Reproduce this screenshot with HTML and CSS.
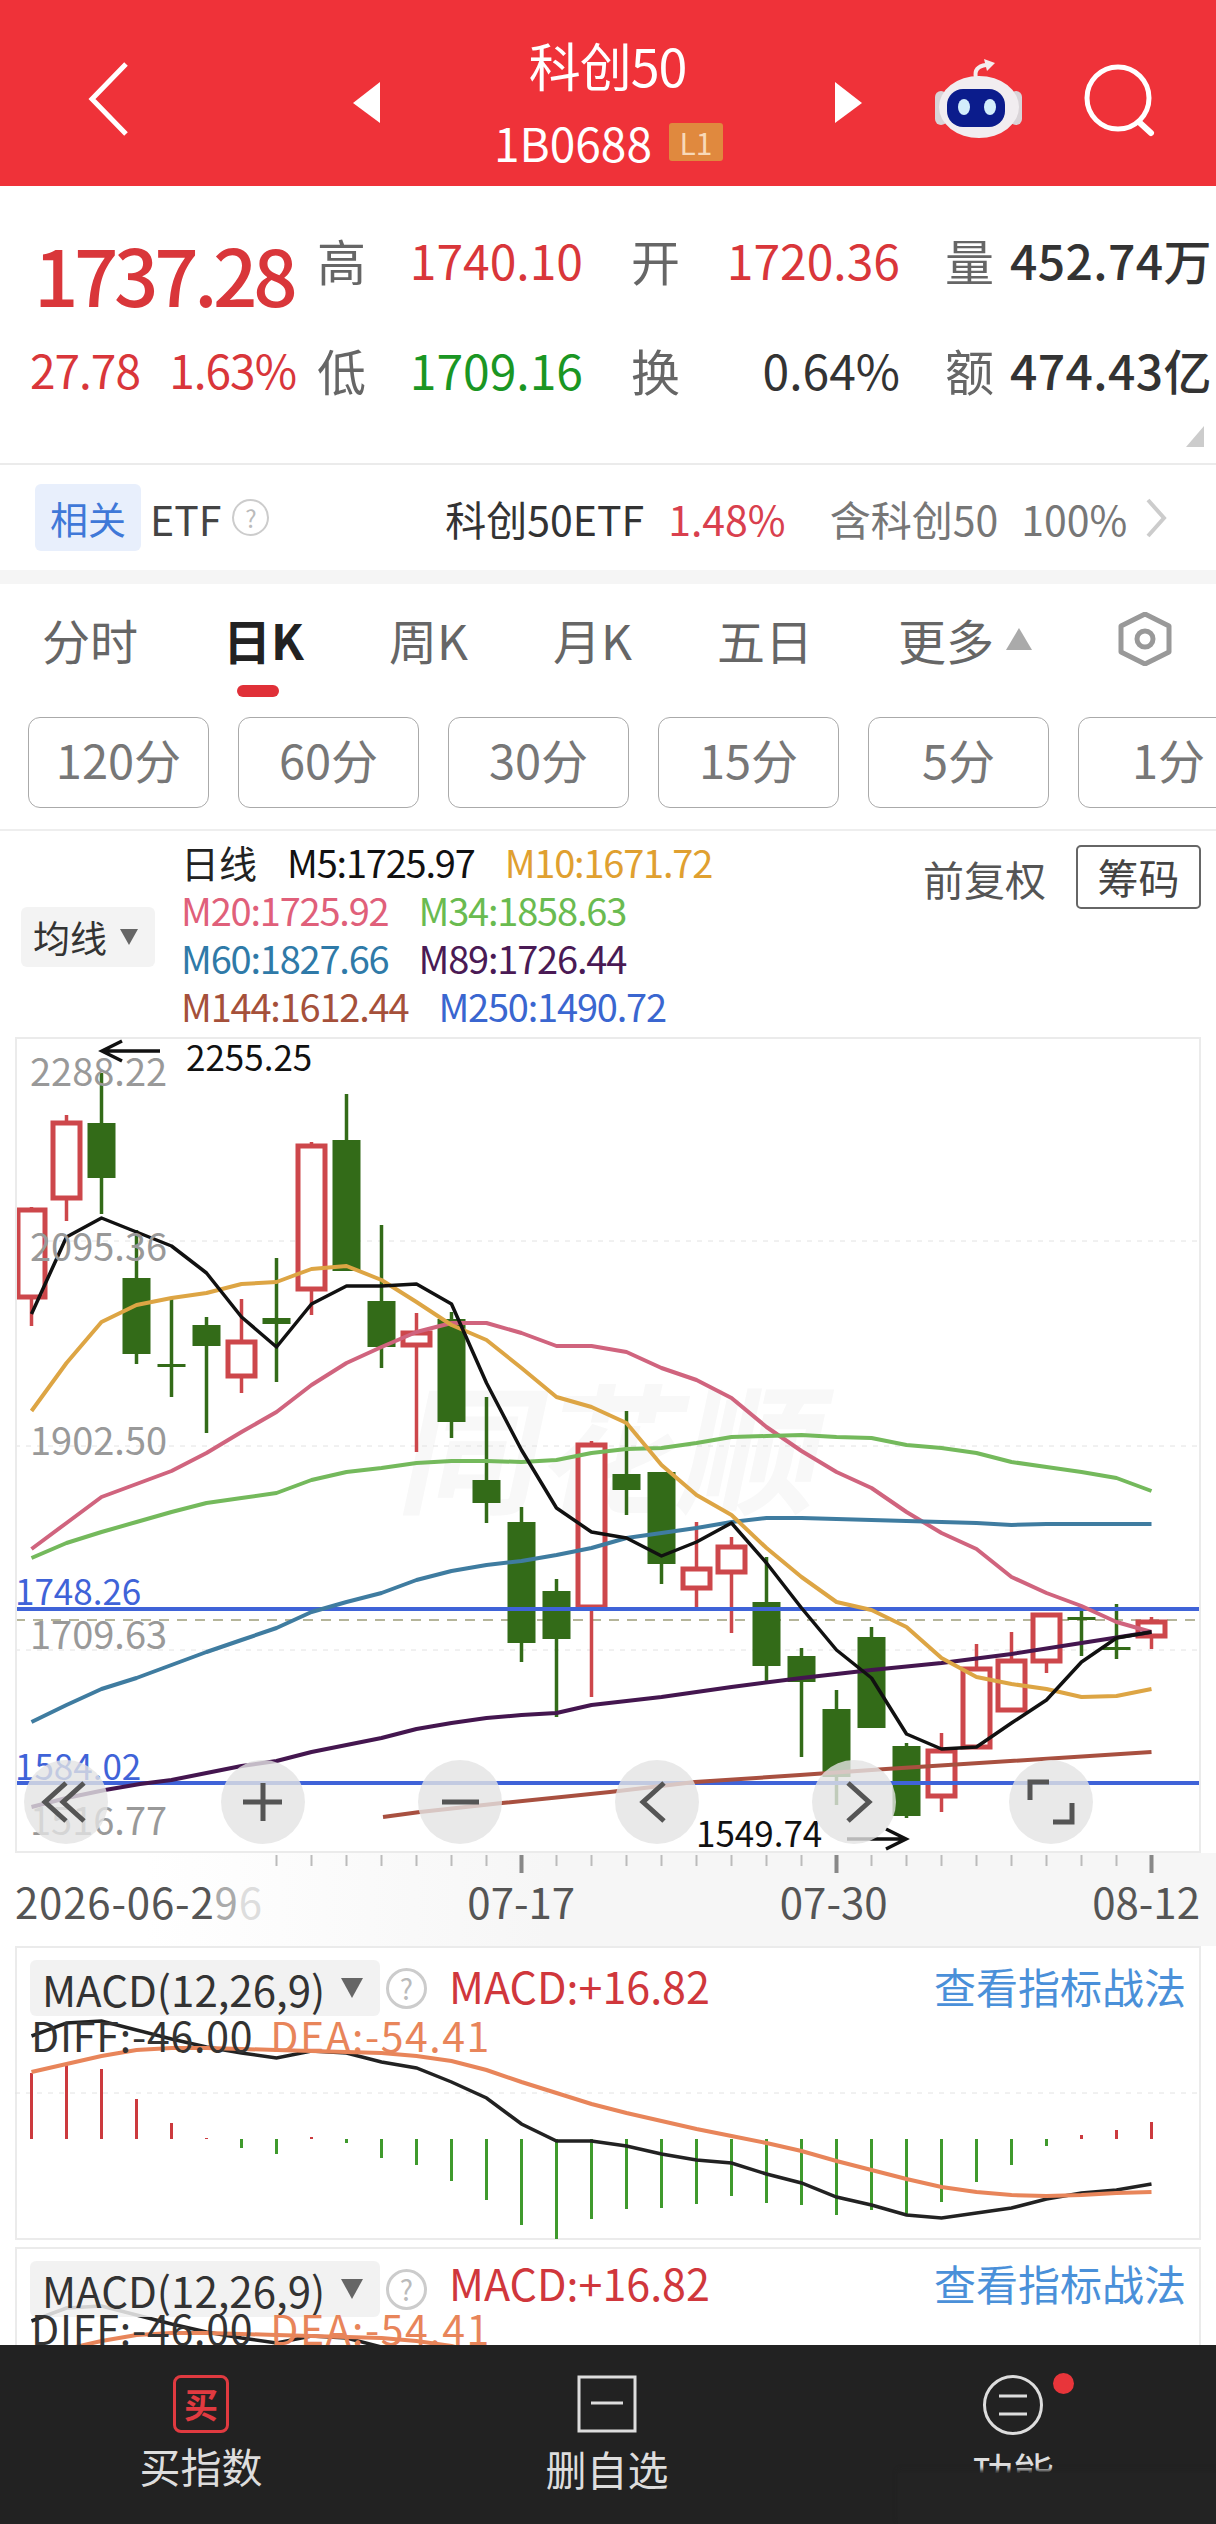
FILE: index.html
```html
<!DOCTYPE html>
<html lang="zh-CN">
<head>
    <meta charset="UTF-8">
    <title>科创50</title>
    <link rel="stylesheet" href="styles.css">
</head>
<body>

<div class="page">

    <header class="topbar">
        <div class="back">
            <svg width="44" height="76" viewBox="0 0 44 76"><path d="M39 3 5 38l34 35" fill="none" stroke="#fff" stroke-width="5"/></svg>
        </div>
        <svg class="arrow" width="27" height="41" viewBox="0 0 27 41"><path d="M27 0 0 21l27 20z" fill="#fff"/></svg>
        <div class="title">
            <div class="title-name">科创50</div>
            <div class="title-code">1B0688<span class="badge">L1</span></div>
        </div>
        <svg class="arrow" width="27" height="41" viewBox="0 0 27 41"><path d="M0 0l27 21L0 41z" fill="#fff"/></svg>
        <div class="top-actions">
            <svg width="90" height="96" viewBox="0 0 90 96">
                <path d="M41 33c-2-8 2-12 10-13" fill="none" stroke="#f4eeee" stroke-width="4"/>
                <path d="M49 14l11 4-8 8z" fill="#f4eeee"/>
                <rect x="0" y="46" width="12" height="34" rx="6" fill="#d9d4d8"/>
                <rect x="75" y="46" width="12" height="34" rx="6" fill="#d9d4d8"/>
                <ellipse cx="44" cy="62" rx="40" ry="31" fill="#f1edf0"/>
                <rect x="12" y="44" width="58" height="38" rx="16" fill="#0b1c8c"/>
                <ellipse cx="29" cy="62" rx="6" ry="8" fill="#d3eefc"/>
                <ellipse cx="55" cy="62" rx="6" ry="8" fill="#d3eefc"/>
            </svg>
            <svg class="search" width="72" height="76" viewBox="0 0 72 76">
                <circle cx="34" cy="34" r="31" fill="none" stroke="#fff" stroke-width="5"/>
                <path d="M55 58l12 11" stroke="#fff" stroke-width="6" stroke-linecap="round"/>
            </svg>
        </div>
    </header>

    <section class="quote">
        <div class="price">1737.28</div>
        <div class="label">高</div>
        <div class="val up">1740.10</div>
        <div class="label">开</div>
        <div class="val up">1720.36</div>
        <div class="label">量</div>
        <div class="val strong">452.74万</div>

        <div class="change"><span>27.78</span><span>1.63%</span></div>
        <div class="label">低</div>
        <div class="val down">1709.16</div>
        <div class="label">换</div>
        <div class="val dark">0.64%</div>
        <div class="label">额</div>
        <div class="val strong">474.43亿</div>

        <svg class="corner" width="18" height="21" viewBox="0 0 18 21"><path d="M18 0v21H0z" fill="#ccc"/></svg>
    </section>

    <section class="etf">
        <span class="etf-chip">相关</span>
        <span class="etf-name">ETF</span>
        <span class="help help-small">?</span>
        <span class="etf-fund">科创50ETF</span>
        <span class="etf-pct">1.48%</span>
        <span class="etf-note">含科创50</span>
        <span class="etf-share">100%</span>
        <svg width="22" height="40" viewBox="0 0 22 40"><path d="M3 2l16 18L3 38" fill="none" stroke="#ccc" stroke-width="4"/></svg>
    </section>

    <nav class="tabs">
        <span class="tab">分时</span>
        <span class="tab tab-active">日K</span>
        <span class="tab">周K</span>
        <span class="tab">月K</span>
        <span class="tab">五日</span>
        <span class="tab tab-more">更多<svg width="26" height="22" viewBox="0 0 26 22"><path d="M13 0l13 22H0z" fill="#aaa"/></svg></span>
        <svg class="tab-settings" width="56" height="54" viewBox="0 0 56 54">
            <path d="M28 2l24 12v26L28 52 4 40V14z" fill="none" stroke="#999" stroke-width="5" stroke-linejoin="round"/>
            <circle cx="28" cy="27" r="8" fill="none" stroke="#999" stroke-width="5"/>
        </svg>
    </nav>

    <div class="periods">
        <span class="period">120分</span>
        <span class="period">60分</span>
        <span class="period">30分</span>
        <span class="period">15分</span>
        <span class="period">5分</span>
        <span class="period">1分</span>
    </div>

    <section class="legend">
        <div class="ma-select">均线<svg width="18" height="16" viewBox="0 0 18 16"><path d="M0 0h18L9 16z" fill="#666"/></svg></div>
        <div class="ma-list">
            <div class="ma-row"><span class="ma-title">日线</span><span class="c-m5">M5:1725.97</span><span class="c-m10">M10:1671.72</span></div>
            <div class="ma-row"><span class="c-m20">M20:1725.92</span><span class="c-m34">M34:1858.63</span></div>
            <div class="ma-row"><span class="c-m60">M60:1827.66</span><span class="c-m89">M89:1726.44</span></div>
            <div class="ma-row"><span class="c-m144">M144:1612.44</span><span class="c-m250">M250:1490.72</span></div>
        </div>
        <div class="legend-right">
            <span class="adjust">前复权</span>
            <span class="chips">筹码</span>
        </div>
    </section>

    <div class="kline">
        <svg class="kline-svg" viewBox="15 1037 1186 816">
            <text class="watermark" x="0" y="0" transform="translate(395 1503) skewX(-12)">同花顺</text>

            <path class="grid" d="M15 1241H1201M15 1446H1201M15 1650H1201"/>
            <path class="grid-last" d="M15 1620H1201"/>

            <path class="wick-down" d="M101.5 1073V1214M136.5 1230V1364M171.5 1299V1397M206.5 1317V1433M276.5 1258V1382M346.5 1094V1271M381.5 1225V1368M451.5 1312V1438M486.5 1397V1523M521.5 1507V1662M556.5 1579V1717M626.5 1411V1515M661.5 1472V1584M766.5 1557V1684M801.5 1648V1757M836.5 1690V1805M871.5 1627V1728M906.5 1743V1818M1081.5 1605V1656M1116.5 1604V1659"/>
            <path class="wick-up" d="M31.5 1207V1326M66.5 1115V1221M241.5 1299V1393M311.5 1142V1315M416.5 1313V1452M591.5 1441V1697M696.5 1522V1608M731.5 1537V1633M941.5 1733V1812M976.5 1644V1749M1011.5 1632V1712M1046.5 1613V1673M1151.5 1617V1649"/>

            <g class="body-down">
                <rect x="87.5" y="1123" width="28" height="55"/>
                <rect x="122.5" y="1278" width="28" height="76"/>
                <rect x="157.5" y="1364" width="28" height="3"/>
                <rect x="192.5" y="1325" width="28" height="21"/>
                <rect x="262.5" y="1318" width="28" height="6"/>
                <rect x="332.5" y="1140" width="28" height="131"/>
                <rect x="367.5" y="1301" width="28" height="46"/>
                <rect x="437.5" y="1319" width="28" height="103"/>
                <rect x="472.5" y="1480" width="28" height="23"/>
                <rect x="507.5" y="1522" width="28" height="121"/>
                <rect x="542.5" y="1591" width="28" height="48"/>
                <rect x="612.5" y="1474" width="28" height="16"/>
                <rect x="647.5" y="1472" width="28" height="92"/>
                <rect x="752.5" y="1602" width="28" height="64"/>
                <rect x="787.5" y="1656" width="28" height="26"/>
                <rect x="822.5" y="1709" width="28" height="68"/>
                <rect x="857.5" y="1637" width="28" height="91"/>
                <rect x="892.5" y="1746" width="28" height="70"/>
                <rect x="1067.5" y="1617" width="28" height="3"/>
                <rect x="1102.5" y="1647" width="28" height="3"/>
            </g>
            <g class="body-up">
                <rect x="18" y="1210" width="27" height="87"/>
                <rect x="53" y="1123" width="27" height="75"/>
                <rect x="228" y="1342" width="27" height="34"/>
                <rect x="298" y="1146" width="27" height="143"/>
                <rect x="403" y="1333" width="27" height="12"/>
                <rect x="578" y="1445" width="27" height="162"/>
                <rect x="683" y="1569" width="27" height="19"/>
                <rect x="718" y="1547" width="27" height="25"/>
                <rect x="928" y="1751" width="27" height="45"/>
                <rect x="963" y="1669" width="27" height="78"/>
                <rect x="998" y="1661" width="27" height="49"/>
                <rect x="1033" y="1615" width="27" height="46"/>
                <rect x="1138" y="1622" width="27" height="14"/>
            </g>

            <path class="level" d="M15 1609H1201M15 1783H1201"/>

            <polyline class="ma ma-20" points="31.5,1549 66.5,1523 101.5,1497 136.5,1484 171.5,1471 206.5,1453 241.5,1432 276.5,1412 311.5,1385 346.5,1363 381.5,1347 416.5,1332 451.5,1323 486.5,1323 521.5,1333 556.5,1346 591.5,1346 626.5,1352 661.5,1368 696.5,1380 731.5,1398 766.5,1427 801.5,1451 836.5,1472 871.5,1488 906.5,1512 941.5,1533 976.5,1549 1011.5,1577 1046.5,1593 1081.5,1606 1116.5,1622 1151.5,1632"/>
            <polyline class="ma ma-34" points="31.5,1558 66.5,1543 101.5,1532 136.5,1522 171.5,1512 206.5,1503 241.5,1498 276.5,1493 311.5,1480 346.5,1472 381.5,1468 416.5,1463 451.5,1461 486.5,1461 521.5,1462 556.5,1460 591.5,1453 626.5,1449 661.5,1448 696.5,1443 731.5,1437 766.5,1436 801.5,1435 836.5,1437 871.5,1438 906.5,1445 941.5,1448 976.5,1453 1011.5,1462 1046.5,1467 1081.5,1472 1116.5,1478 1151.5,1491"/>
            <polyline class="ma ma-60" points="31.5,1722 66.5,1705 101.5,1689 136.5,1678 171.5,1665 206.5,1652 241.5,1640 276.5,1628 311.5,1612 346.5,1602 381.5,1593 416.5,1580 451.5,1571 486.5,1565 521.5,1561 556.5,1555 591.5,1548 626.5,1538 661.5,1533 696.5,1528 731.5,1522 766.5,1518 801.5,1518 836.5,1519 871.5,1520 906.5,1521 941.5,1522 976.5,1523 1011.5,1525 1046.5,1524 1151.5,1524"/>
            <polyline class="ma ma-89" points="31.5,1807 66.5,1798 105,1790 140,1784 171.5,1780 206.5,1773 241.5,1766 276.5,1761 311.5,1752 346.5,1745 381.5,1738 416.5,1729 451.5,1723 486.5,1718 521.5,1715 556.5,1713 591.5,1705 661.5,1697 731.5,1687 801.5,1678 871.5,1670 941.5,1663 1011.5,1654 1081.5,1643 1151.5,1632"/>
            <polyline class="ma ma-144" points="383,1817 420,1812 502,1803 610,1792 695,1782 800,1775 886,1769 1151.5,1752"/>
            <polyline class="ma ma-10" points="31.5,1411 66.5,1363 101.5,1322 136.5,1305 171.5,1298 206.5,1293 241.5,1284 276.5,1282 311.5,1269 346.5,1266 381.5,1280 416.5,1302 451.5,1325 486.5,1340 521.5,1368 556.5,1397 591.5,1407 626.5,1423 661.5,1465 696.5,1495 731.5,1515 766.5,1548 801.5,1577 836.5,1602 871.5,1610 906.5,1627 941.5,1658 976.5,1677 1011.5,1684 1046.5,1689 1081.5,1697 1116.5,1696 1151.5,1689"/>
            <polyline class="ma ma-5" points="31.5,1314 66.5,1237 101.5,1218 136.5,1232 171.5,1246 206.5,1273 241.5,1317 276.5,1347 311.5,1304 346.5,1286 381.5,1286 416.5,1284 451.5,1304 486.5,1383 521.5,1450 556.5,1508 591.5,1532 626.5,1538 661.5,1556 696.5,1542 731.5,1523 766.5,1563 801.5,1608 836.5,1650 871.5,1678 906.5,1734 941.5,1749 976.5,1747 1011.5,1723 1046.5,1700 1081.5,1662 1116.5,1638 1151.5,1632"/>

            <text class="axis" x="30" y="1086">2288.22</text>
            <text class="axis" x="30" y="1261">2095.36</text>
            <text class="axis" x="30" y="1455">1902.50</text>
            <text class="axis" x="30" y="1649">1709.63</text>
            <text class="axis" x="30" y="1835">1516.77</text>
            <text class="axis-level" x="15" y="1605">1748.26</text>
            <text class="axis-level" x="15" y="1780">1584.02</text>
            <text class="mark" x="186" y="1071">2255.25</text>
            <text class="mark" x="696" y="1847">1549.74</text>
            <path class="mark-arrow" d="M160 1051H102M122 1041l-20 10 20 10"/>
            <path class="mark-arrow" d="M847 1839H906M886 1829l20 10-20 10"/>

            <circle class="float-btn" cx="66" cy="1802" r="42"/>
            <circle class="float-btn" cx="263" cy="1802" r="42"/>
            <circle class="float-btn" cx="460" cy="1802" r="42"/>
            <circle class="float-btn" cx="657" cy="1802" r="42"/>
            <circle class="float-btn" cx="854" cy="1802" r="42"/>
            <circle class="float-btn" cx="1051" cy="1802" r="42"/>
            <path class="float-icon" d="M66 1783l-21 19 21 19M84 1783l-21 19 21 19"/>
            <path class="float-icon" d="M243 1802H282M263 1783V1821"/>
            <path class="float-icon" d="M442 1802H479"/>
            <path class="float-icon" d="M664 1783l-21 19 21 19"/>
            <path class="float-icon" d="M848 1783l21 19-21 19"/>
            <path class="float-icon" d="M1049 1782H1030V1800M1053 1822H1072V1803"/>
        </svg>
    </div>

    <div class="dates">
        <svg class="dates-ticks" viewBox="0 0 1216 24">
            <path class="tick" d="M276.5 2V13M311.5 2V13M346.5 2V13M381.5 2V13M416.5 2V13M451.5 2V13M486.5 2V13M556.5 2V13M591.5 2V13M626.5 2V13M661.5 2V13M696.5 2V13M731.5 2V13M766.5 2V13M801.5 2V13M871.5 2V13M906.5 2V13M941.5 2V13M976.5 2V13M1011.5 2V13M1046.5 2V13M1081.5 2V13M1116.5 2V13"/>
            <path class="tick-major" d="M521.5 2V20M836.5 2V20M1151.5 2V20"/>
        </svg>
        <span class="date-first">2026-06-2<span class="fade-1">9</span><span class="fade-2">6</span></span>
        <span>07-17</span>
        <span>07-30</span>
        <span>08-12</span>
    </div>

    <section class="macd">
        <svg class="macd-svg" viewBox="15 1946 1186 294">
            <path class="grid" d="M15 2093H1201"/>
            <path class="bar-up" d="M31.5 2139V2073M66.5 2139V2064M101.5 2139V2069M136.5 2139V2099M171.5 2139V2123M206.5 2139V2138M311.5 2139V2137M1081.5 2139V2135M1116.5 2139V2130M1151.5 2139V2122"/>
            <path class="bar-down" d="M241.5 2139V2148M276.5 2139V2154M346.5 2139V2143M381.5 2139V2158M416.5 2139V2165M451.5 2139V2181M486.5 2139V2200M521.5 2139V2225M556.5 2139V2239M591.5 2139V2219M626.5 2139V2209M661.5 2139V2208M696.5 2139V2204M731.5 2139V2196M766.5 2139V2203M801.5 2139V2205M836.5 2139V2215M871.5 2139V2210M906.5 2139V2215M941.5 2139V2202M976.5 2139V2182M1011.5 2139V2165M1046.5 2139V2146"/>
            <g id="macd-lines">
                <polyline class="dif" points="31.5,2036 66.5,2023 101.5,2021 136.5,2030 171.5,2039 206.5,2047 241.5,2053 276.5,2058 311.5,2051 346.5,2053 381.5,2062 416.5,2068 451.5,2082 486.5,2098 521.5,2124 556.5,2141 591.5,2141 626.5,2146 661.5,2154 696.5,2160 731.5,2163 766.5,2174 801.5,2183 836.5,2197 871.5,2205 906.5,2215 941.5,2218 976.5,2213 1011.5,2208 1046.5,2199 1081.5,2193 1116.5,2190 1151.5,2184"/>
                <polyline class="dea" points="31.5,2072 66.5,2064 101.5,2056 136.5,2050 171.5,2048 206.5,2048 241.5,2049 276.5,2050 311.5,2051 346.5,2052 381.5,2053 416.5,2056 451.5,2061 486.5,2070 521.5,2082 556.5,2093 591.5,2104 626.5,2113 661.5,2121 696.5,2129 731.5,2136 766.5,2143 801.5,2151 836.5,2161 871.5,2170 906.5,2179 941.5,2187 976.5,2192 1011.5,2195 1046.5,2196 1081.5,2195 1116.5,2193 1151.5,2192"/>
            </g>
        </svg>
        <div class="macd-head">
            <div class="macd-select">MACD(12,26,9)<svg width="22" height="20" viewBox="0 0 22 20"><path d="M0 0h22L11 20z" fill="#666"/></svg></div>
            <span class="help">?</span>
            <span class="macd-value">MACD:+16.82</span>
            <a class="macd-link">查看指标战法</a>
        </div>
        <div class="macd-values"><span class="dif-text">DIFF:-46.00</span><span class="dea-text">DEA:-54.41</span></div>
    </section>

    <section class="macd macd-second">
        <svg class="macd-svg" viewBox="15 1962 1186 294"><use href="#macd-lines"/></svg>
        <div class="macd-head">
            <div class="macd-select">MACD(12,26,9)<svg width="22" height="20" viewBox="0 0 22 20"><path d="M0 0h22L11 20z" fill="#666"/></svg></div>
            <span class="help">?</span>
            <span class="macd-value">MACD:+16.82</span>
            <a class="macd-link">查看指标战法</a>
        </div>
        <div class="macd-values"><span class="dif-text">DIFF:-46.00</span><span class="dea-text">DEA:-54.41</span></div>
    </section>
</div>

<footer class="bottom">
    <div class="bottom-item">
        <span class="buy-icon">买</span>
        <span class="bottom-label buy-label">买指数</span>
    </div>
    <div class="bottom-item">
        <svg width="60" height="58" viewBox="0 0 60 58">
            <rect x="2" y="2" width="56" height="54" fill="none" stroke="#ddd" stroke-width="3"/>
            <path d="M14 28h32" stroke="#ddd" stroke-width="3"/>
        </svg>
        <span class="bottom-label">删自选</span>
    </div>
    <div class="bottom-item">
        <svg width="62" height="60" viewBox="0 0 62 60">
            <circle cx="31" cy="30" r="28.5" fill="none" stroke="#ddd" stroke-width="3"/>
            <path d="M17 21h28M17 39h28" stroke="#ddd" stroke-width="3"/>
        </svg>
        <span class="bottom-label">功能</span>
        <i class="red-dot"></i>
    </div>
    <div class="bottom-mask"></div>
</footer>

</body>
</html>
```

FILE: styles.css
```css
* {
    box-sizing: border-box;
}

html, body {
    margin: 0;
    height: 2524px;
    overflow: hidden;
}

body {
    display: flex;
    flex-direction: column;
    font-family: "Noto Sans CJK SC", "Noto Sans", sans-serif;
    background: #fff;
    color: #333;
}

.page {
    flex: 1;
    min-height: 0;
    overflow: hidden;
}

/* top bar */
.topbar {
    display: grid;
    grid-template-columns: 353px 27px 455px 27px 1fr;
    align-items: center;
    height: 186px;
    background: #ef3239;
    color: #fff;
}

.back {
    display: flex;
    padding: 12px 0 0 87px;
}

.arrow {
    margin-top: 18px;
}

.title {
    display: flex;
    flex-direction: column;
    align-items: center;
    padding-top: 12px;
}

.title-name {
    font-size: 52px;
    line-height: 60px;
    letter-spacing: -1px;
}

.title-code {
    display: flex;
    align-items: center;
    gap: 17px;
    margin-top: 26px;
    padding-left: 2px;
    font-size: 46px;
    line-height: 42px;
}

.badge {
    width: 54px;
    height: 38px;
    border-radius: 3px;
    background: #e0893e;
    color: #f8d9b8;
    font-size: 30px;
    line-height: 38px;
    text-align: center;
}

.top-actions {
    display: flex;
    align-items: center;
    gap: 59px;
    padding-left: 73px;
}

.search {
    margin-top: 18px;
}

/* quote */
.quote {
    position: relative;
    display: grid;
    grid-template-columns: 296px 70px 217px 97px 220px 94px 222px;
    grid-template-rows: 110px 110px;
    align-items: center;
    height: 279px;
    padding-top: 18px;
    border-bottom: 2px solid #ebebeb;
}

.price {
    padding: 29px 0 0 34px;
    color: #d9363a;
    font-size: 78px;
    font-weight: 500;
    line-height: 81px;
    letter-spacing: -4.4px;
    white-space: nowrap;
}

.change {
    display: flex;
    justify-content: space-between;
    padding-left: 30px;
    color: #d9363a;
    font-size: 46px;
    letter-spacing: -1px;
}

.label {
    color: #666;
    font-size: 49px;
    text-align: right;
}

.val {
    font-size: 48px;
    text-align: right;
    white-space: nowrap;
}

.up {
    color: #d9363a;
}

.down {
    color: #1a9623;
}

.dark {
    color: #333;
}

.strong {
    padding-right: 4px;
    color: #333;
    font-weight: 500;
    letter-spacing: .4px;
}

.corner {
    position: absolute;
    right: 12px;
    bottom: 16px;
}

/* related etf */
.etf {
    display: flex;
    align-items: center;
    height: 105px;
    padding-left: 35px;
    border-bottom: 14px solid #f5f5f5;
    box-sizing: content-box;
    font-size: 41px;
}

.etf-chip {
    width: 106px;
    height: 67px;
    border-radius: 6px;
    background: #e8effc;
    color: #3f78d8;
    font-size: 38px;
    line-height: 67px;
    text-align: center;
}

.etf-name {
    margin-left: 9px;
    color: #444;
}

.help {
    display: flex;
    align-items: center;
    justify-content: center;
    width: 41px;
    height: 41px;
    border: 3px solid #ccc;
    border-radius: 50%;
    color: #bbb;
    font-size: 28px;
}

.help-small {
    width: 37px;
    height: 37px;
    margin-left: 11px;
    border-width: 2px;
    font-size: 24px;
}

.etf-fund {
    margin-left: 176px;
    color: #333;
}

.etf-pct {
    margin-left: 24px;
    color: #d9404e;
}

.etf-note {
    margin-left: 44px;
    color: #777;
}

.etf-share {
    margin-left: 23px;
    margin-right: 18px;
    color: #777;
}

/* tabs */
.tabs {
    display: flex;
    align-items: center;
    gap: 85px;
    height: 133px;
    padding: 0 44px 24px 42px;
    font-size: 48px;
}

.tab {
    position: relative;
    flex: none;
    display: flex;
    align-items: center;
    color: #666;
    line-height: 60px;
    white-space: nowrap;
}

.tab-active {
    color: #222;
    font-weight: 700;
}

.tab-active::after {
    content: "";
    position: absolute;
    left: 14px;
    bottom: -28px;
    width: 42px;
    height: 12px;
    border-radius: 6px;
    background: #e03038;
}

.tab-more svg {
    margin-left: 12px;
}

.tab-settings {
    flex: none;
    margin-left: auto;
}

/* period buttons */
.periods {
    display: flex;
    gap: 29px;
    padding: 0 0 21px 28px;
    overflow: hidden;
    border-bottom: 2px solid #eee;
}

.period {
    flex: none;
    width: 181px;
    height: 91px;
    border: 1px solid #aaa;
    border-radius: 12px;
    color: #777;
    font-size: 47px;
    line-height: 81px;
    text-align: center;
}

/* moving average legend */
.legend {
    display: flex;
    align-items: flex-start;
    height: 206px;
    padding-left: 21px;
}

.ma-select {
    display: flex;
    align-items: center;
    gap: 13px;
    width: 134px;
    height: 60px;
    margin-top: 76px;
    padding-left: 12px;
    border-radius: 6px;
    background: #f3f3f3;
    color: #333;
    font-size: 37px;
}

.ma-list {
    margin-left: 26px;
    padding-top: 7px;
    font-size: 38px;
    letter-spacing: -1.2px;
}

.ma-row {
    display: flex;
    gap: 30px;
    height: 48px;
    line-height: 48px;
}

.ma-title {
    color: #222;
    letter-spacing: 0;
}

.c-m5 { color: #111; }
.c-m10 { color: #e0a030; }
.c-m20 { color: #e0607a; }
.c-m34 { color: #6abb50; }
.c-m60 { color: #2f7aa8; }
.c-m89 { color: #4a1a55; }
.c-m144 { color: #a5503a; }
.c-m250 { color: #3a66d0; }

.legend-right {
    display: flex;
    align-items: center;
    gap: 30px;
    margin: 14px 15px 0 auto;
}

.adjust {
    margin-top: 2px;
    color: #555;
    font-size: 41px;
}

.chips {
    width: 125px;
    height: 64px;
    border: 2px solid #666;
    border-radius: 5px;
    color: #444;
    font-size: 41px;
    line-height: 58px;
    text-align: center;
}

/* k line chart */
.kline {
    height: 816px;
    margin: 0 15px;
    outline: 2px solid #ebebeb;
    outline-offset: -2px;
}

.kline-svg {
    display: block;
    width: 1186px;
    height: 816px;
}

.watermark {
    fill: #f8f8f8;
    font-size: 140px;
    font-weight: 700;
}

.grid {
    fill: none;
    stroke: #e2e2e2;
    stroke-width: 1;
    stroke-dasharray: 5 6;
}

.grid-last {
    fill: none;
    stroke: #b5b59a;
    stroke-width: 2;
    stroke-dasharray: 10 8;
}

.wick-down {
    fill: none;
    stroke: #336b18;
    stroke-width: 3.5;
}

.wick-up {
    fill: none;
    stroke: #cd474b;
    stroke-width: 3.5;
}

.body-down {
    fill: #336b18;
}

.body-up {
    fill: #fff;
    stroke: #cd474b;
    stroke-width: 5;
}

.level {
    fill: none;
    stroke: #3f63d8;
    stroke-width: 4;
}

.ma {
    fill: none;
    stroke-width: 4;
    stroke-linejoin: round;
}

.ma-5 { stroke: #111; stroke-width: 3.5; }
.ma-10 { stroke: #dda544; }
.ma-20 { stroke: #d0647e; }
.ma-34 { stroke: #74b95c; }
.ma-60 { stroke: #3f7ca0; }
.ma-89 { stroke: #44164f; }
.ma-144 { stroke: #a85040; }

.axis {
    fill: #999;
    font-size: 38px;
}

.axis-level {
    fill: #3f63d8;
    font-size: 35px;
}

.mark {
    fill: #111;
    font-size: 35px;
}

.mark-arrow {
    fill: none;
    stroke: #111;
    stroke-width: 3.5;
}

.float-btn {
    fill: rgba(228, 228, 228, .8);
}

.float-icon {
    fill: none;
    stroke: #555;
    stroke-width: 5;
}

/* date strip */
.dates {
    position: relative;
    display: flex;
    justify-content: space-between;
    align-items: center;
    height: 93px;
    padding: 1px 16px 0 15px;
    background: linear-gradient(90deg, #fff 12%, #f6f6f6 45%);
    color: #555;
    font-size: 42px;
}

.date-first {
    letter-spacing: .8px;
}

.dates-ticks {
    position: absolute;
    left: 0;
    top: 0;
    width: 1216px;
    height: 24px;
}

.tick {
    fill: none;
    stroke: #bbb;
    stroke-width: 2;
}

.tick-major {
    fill: none;
    stroke: #888;
    stroke-width: 4;
}

.fade-1 {
    color: #aaa;
}

.fade-2 {
    color: #ddd;
}

/* macd panels */
.macd {
    position: relative;
    height: 294px;
    margin: 0 15px 7px;
    padding: 12px 13px 0;
    border: 2px solid #ebebeb;
    background: #fff;
}

.macd-svg {
    position: absolute;
    left: -2px;
    top: -2px;
    width: 1186px;
    height: 294px;
    overflow: visible;
}

.macd-head {
    position: relative;
    display: flex;
    align-items: center;
    height: 56px;
}

.macd-select {
    display: flex;
    align-items: center;
    gap: 16px;
    width: 350px;
    height: 56px;
    padding-left: 12px;
    border-radius: 6px;
    background: rgba(240, 240, 240, .85);
    color: #333;
    font-size: 42px;
}

.macd-head .help {
    margin-left: 6px;
}

.macd-value {
    margin: 0 0 6px 22px;
    color: #d0373c;
    font-size: 43px;
}

.macd-link {
    margin: 0 0 6px auto;
    color: #4a90d9;
    font-size: 42px;
}

.macd-second .macd-value,
.macd-second .macd-link {
    margin-bottom: 14px;
}

.macd-values {
    position: relative;
    display: flex;
    gap: 17px;
    margin-top: -3px;
    padding-left: 1px;
    font-size: 41px;
    line-height: 42px;
    letter-spacing: .8px;
}

.macd-second .macd-values {
    margin-top: -11px;
}

.dif-text {
    color: #333;
}

.dea-text {
    color: #e8855a;
    letter-spacing: 1.5px;
}

.dif {
    fill: none;
    stroke: #222;
    stroke-width: 3.5;
}

.dea {
    fill: none;
    stroke: #e8855a;
    stroke-width: 4;
}

.bar-up {
    fill: none;
    stroke: #cc3a3e;
    stroke-width: 3;
}

.bar-down {
    fill: none;
    stroke: #3f9a2d;
    stroke-width: 3;
}

/* bottom nav */
.bottom {
    position: relative;
    flex: none;
    display: grid;
    grid-template-columns: repeat(3, 1fr);
    height: 179px;
    margin-left: -2px;
    background: #222;
    color: #ddd;
}

.bottom-item {
    position: relative;
    display: flex;
    flex-direction: column;
    align-items: center;
    padding-top: 30px;
    font-size: 41px;
    line-height: 44px;
}

.bottom-label {
    margin-top: 13px;
}

.buy-label {
    margin-top: 10px;
}

.buy-icon {
    width: 56px;
    height: 58px;
    border: 3px solid #e03a40;
    border-radius: 8px;
    color: #e03a40;
    font-size: 34px;
    font-weight: 700;
    line-height: 52px;
    text-align: center;
}

.red-dot {
    position: absolute;
    left: 243px;
    top: 28px;
    width: 21px;
    height: 21px;
    border-radius: 50%;
    background: #e8353a;
}

.bottom-mask {
    position: absolute;
    left: 900px;
    right: 0;
    top: 128px;
    bottom: 0;
    background: #232323;
    box-shadow: 0 -3px 4px #232323;
}
```
